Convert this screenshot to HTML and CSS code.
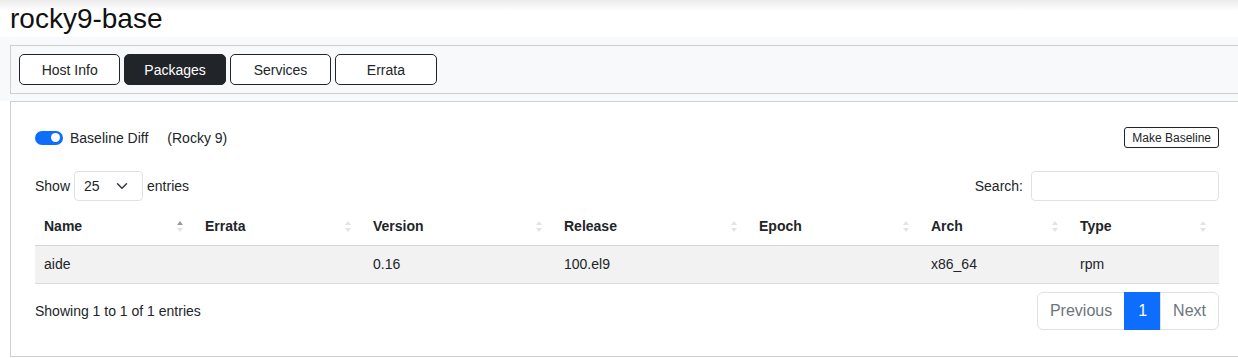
FILE: index.html
```html
<!DOCTYPE html>
<html lang="en">
  <head>
    <meta charset="UTF-8" />
    <meta name="viewport" content="width=device-width, initial-scale=1.0" />
    <title>rocky9-base</title>
    <link rel="stylesheet" href="styles.css">
  </head>
  <body>
    <header class="page-head">
      <h1 class="host-title">rocky9-base</h1>
    </header>

    <div class="tabs-area">
      <nav class="tabs">
        <button class="tab">Host Info</button>
        <button class="tab active">Packages</button>
        <button class="tab">Services</button>
        <button class="tab">Errata</button>
      </nav>
    </div>

    <div class="panel">
      <div class="baseline-row">
        <label class="switch-label">
          <span class="switch on"><span class="knob"></span></span>
          <span>Baseline Diff</span>
        </label>
        <span class="baseline-name">(Rocky 9)</span>
        <button class="btn-small">Make Baseline</button>
      </div>

      <div class="table-controls">
        <div class="length">
          <span>Show</span>
          <span class="select-wrap">
            <select class="select">
              <option>10</option>
              <option selected>25</option>
              <option>50</option>
              <option>100</option>
            </select>
            <svg class="chevron" width="12" height="12" viewBox="0 0 16 16">
              <path d="M2 5l6 6 6-6" fill="none" stroke="#343a40" stroke-width="2" stroke-linecap="round" stroke-linejoin="round"/>
            </svg>
          </span>
          <span>entries</span>
        </div>
        <div class="search">
          <span>Search:</span>
          <input class="search-input" type="search" />
        </div>
      </div>

      <table class="packages">
        <colgroup>
          <col style="width:161px">
          <col style="width:168px">
          <col style="width:191px">
          <col style="width:195px">
          <col style="width:172px">
          <col style="width:149px">
          <col style="width:148px">
        </colgroup>
        <thead>
          <tr>
            <th><div class="th-in">Name<span class="sort asc"></span></div></th>
            <th><div class="th-in">Errata<span class="sort"></span></div></th>
            <th><div class="th-in">Version<span class="sort"></span></div></th>
            <th><div class="th-in">Release<span class="sort"></span></div></th>
            <th><div class="th-in">Epoch<span class="sort"></span></div></th>
            <th><div class="th-in">Arch<span class="sort"></span></div></th>
            <th><div class="th-in">Type<span class="sort"></span></div></th>
          </tr>
        </thead>
        <tbody>
          <tr class="odd">
            <td>aide</td>
            <td></td>
            <td>0.16</td>
            <td>100.el9</td>
            <td></td>
            <td>x86_64</td>
            <td>rpm</td>
          </tr>
        </tbody>
      </table>

      <div class="table-footer">
        <div class="info">Showing 1 to 1 of 1 entries</div>
        <ul class="pagination">
          <li class="page disabled">Previous</li>
          <li class="page current">1</li>
          <li class="page disabled">Next</li>
        </ul>
      </div>
    </div>
  </body>
</html>
```

FILE: styles.css
```css
html,
body {
  margin: 0;
  height: 100%;
}
body {
  font-family: "Liberation Sans", Arial, sans-serif;
  font-size: 14px;
  color: #212529;
  background: #fff;
  overflow: hidden;
}

.page-head {
  height: 37px;
  padding-left: 10px;
  background: linear-gradient(#ececec 0, #fff 11px);
}
.host-title {
  margin: 0;
  font-size: 28px;
  font-weight: normal;
  line-height: 37px;
  color: #111;
}

.tabs-area {
  background: #f8f9fa;
  padding: 8px 0 7px 10px;
}
.tabs {
  display: flex;
  gap: 4px;
  padding: 8px;
  border: 1px solid #cfcfcf;
  border-right: none;
  background: #f8f9fa;
}
.tab {
  width: 101.4px;
  height: 31px;
  font-family: inherit;
  font-size: 14px;
  color: #212529;
  background: #fff;
  border: 1px solid #212529;
  border-radius: 5px;
  cursor: pointer;
}
.tab.active {
  background: #212529;
  color: #fff;
}

.panel {
  margin-left: 10px;
  padding: 25px 19px 26px 24px;
  border: 1px solid #cfcfcf;
  border-right: none;
  background: #fff;
}

.baseline-row {
  display: flex;
  align-items: center;
  height: 21px;
}
.switch-label {
  display: flex;
  align-items: center;
  gap: 7px;
}
.switch {
  display: flex;
  align-items: center;
  justify-content: flex-end;
  width: 28px;
  height: 14px;
  padding: 0 3px;
  box-sizing: border-box;
  border-radius: 7px;
  background: #0d6efd;
}
.knob {
  width: 9px;
  height: 9px;
  border-radius: 50%;
  background: #fff;
}
.baseline-name {
  margin-left: 19px;
}
.btn-small {
  margin-left: auto;
  height: 21px;
  padding: 0 7px;
  font-family: inherit;
  font-size: 12px;
  color: #212529;
  background: #fff;
  border: 1px solid #212529;
  border-radius: 3px;
}

.table-controls {
  display: flex;
  justify-content: space-between;
  align-items: center;
  margin-top: 23px;
}
.length,
.search {
  display: flex;
  align-items: center;
  gap: 4px;
}
.search {
  gap: 8px;
}
.select-wrap {
  position: relative;
  display: inline-block;
}
.select {
  appearance: none;
  -webkit-appearance: none;
  width: 69px;
  height: 30px;
  padding: 0 9px;
  font-family: inherit;
  font-size: 14px;
  color: #212529;
  background: #fff;
  border: 1px solid #dee2e6;
  border-radius: 4px;
}
.chevron {
  position: absolute;
  right: 15px;
  top: 9px;
  pointer-events: none;
}
.search-input {
  width: 188px;
  height: 30px;
  box-sizing: border-box;
  border: 1px solid #dee2e6;
  border-radius: 4px;
}

.packages {
  width: 1184px;
  margin-top: 7px;
  border-collapse: collapse;
  table-layout: fixed;
}
.packages th,
.packages td {
  padding: 10px 13px 10px 9px;
  line-height: 17px;
  text-align: left;
}
.packages th {
  font-weight: bold;
  border-bottom: 1px solid #d6d6d6;
}
.packages td {
  border-bottom: 1px solid #dcdcdc;
}
.packages tr.odd td {
  background: #f2f2f2;
}
.th-in {
  display: flex;
  justify-content: space-between;
  align-items: center;
}
.sort {
  display: flex;
  flex-direction: column;
  gap: 3px;
}
.sort::before,
.sort::after {
  content: "";
  width: 0;
  height: 0;
  border-left: 3px solid transparent;
  border-right: 3px solid transparent;
}
.sort::before {
  border-bottom: 4px solid #e3e3e3;
}
.sort::after {
  border-top: 4px solid #e3e3e3;
}
.sort.asc::before {
  border-bottom-color: #9a9a9a;
}

.table-footer {
  display: flex;
  justify-content: space-between;
  align-items: center;
  margin-top: 8px;
}
.pagination {
  display: flex;
  margin: 0;
  padding: 0;
  list-style: none;
  font-size: 16px;
}
.page {
  padding: 6px 12px;
  line-height: 24px;
  color: #6c757d;
  background: #fff;
  border: 1px solid #dee2e6;
  margin-left: -1px;
}
.page:first-child {
  border-radius: 6px 0 0 6px;
}
.page:last-child {
  border-radius: 0 6px 6px 0;
}
.page.current {
  color: #fff;
  background: #0d6efd;
  border-color: #0d6efd;
  padding: 6px 13px;
}
```
